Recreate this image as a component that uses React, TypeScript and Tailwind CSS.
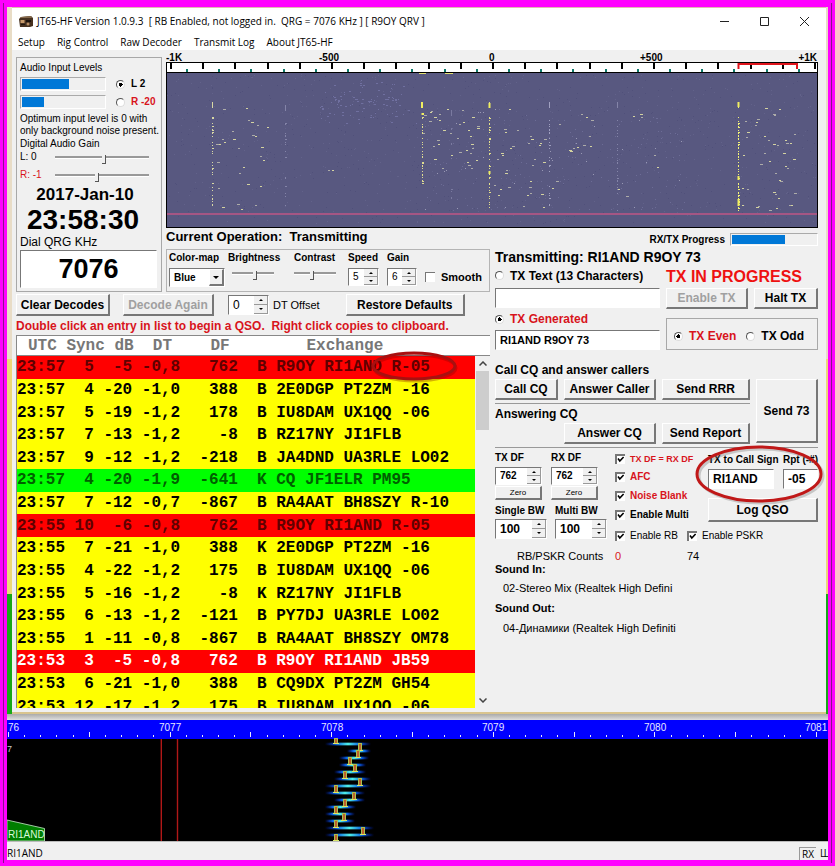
import { useState } from "react";
import type { ReactNode } from "react";
import clsx from "clsx";

type Decode = {
  utc: string;
  sync: number;
  db: number;
  dt: string;
  df: number;
  kind: string;
  text: string;
  tone?: "call" | "cq" | "selected";
};

const decodes: Decode[] = [
  { utc: "23:57", sync: 5, db: -5, dt: "-0,8", df: 762, kind: "B", text: "R9OY RI1AND R-05", tone: "call" },
  { utc: "23:57", sync: 4, db: -20, dt: "-1,0", df: 388, kind: "B", text: "2E0DGP PT2ZM -16" },
  { utc: "23:57", sync: 5, db: -19, dt: "-1,2", df: 178, kind: "B", text: "IU8DAM UX1QQ -06" },
  { utc: "23:57", sync: 7, db: -13, dt: "-1,2", df: -8, kind: "B", text: "RZ17NY JI1FLB" },
  { utc: "23:57", sync: 9, db: -12, dt: "-1,2", df: -218, kind: "B", text: "JA4DND UA3RLE LO02" },
  { utc: "23:57", sync: 4, db: -20, dt: "-1,9", df: -641, kind: "K", text: "CQ JF1ELR PM95", tone: "cq" },
  { utc: "23:57", sync: 7, db: -12, dt: "-0,7", df: -867, kind: "B", text: "RA4AAT BH8SZY R-10" },
  { utc: "23:55", sync: 10, db: -6, dt: "-0,8", df: 762, kind: "B", text: "R9OY RI1AND R-05", tone: "call" },
  { utc: "23:55", sync: 7, db: -21, dt: "-1,0", df: 388, kind: "K", text: "2E0DGP PT2ZM -16" },
  { utc: "23:55", sync: 4, db: -22, dt: "-1,2", df: 175, kind: "B", text: "IU8DAM UX1QQ -06" },
  { utc: "23:55", sync: 5, db: -16, dt: "-1,2", df: -8, kind: "K", text: "RZ17NY JI1FLB" },
  { utc: "23:55", sync: 6, db: -13, dt: "-1,2", df: -121, kind: "B", text: "PY7DJ UA3RLE LO02" },
  { utc: "23:55", sync: 1, db: -11, dt: "-0,8", df: -867, kind: "B", text: "RA4AAT BH8SZY OM78" },
  { utc: "23:53", sync: 3, db: -5, dt: "-0,8", df: 762, kind: "B", text: "R9OY RI1AND JB59", tone: "selected" },
  { utc: "23:53", sync: 6, db: -21, dt: "-1,0", df: 388, kind: "B", text: "CQ9DX PT2ZM GH54" },
  { utc: "23:53", sync: 12, db: -17, dt: "-1,2", df: 175, kind: "B", text: "IU8DAM UX1QQ -06" },
];

const sunken = "border-t border-l border-b border-r border-t-[#777] border-l-[#777] border-b-white border-r-white";
const raised =
  "border-t border-l border-b-2 border-r-2 border-t-white border-l-white border-b-[#777] border-r-[#777] bg-[#f0f0f0]";

function Button({ children, className, disabled }: { children: ReactNode; className?: string; disabled?: boolean }) {
  return (
    <button
      type="button"
      disabled={disabled}
      className={clsx(
        raised,
        "flex items-center justify-center font-bold whitespace-nowrap",
        disabled && "text-[#a0a0a0]",
        className
      )}
    >
      {children}
    </button>
  );
}

function Check({ label, className }: { label: string; className?: string }) {
  const [on, setOn] = useState(true);
  return (
    <label className={clsx("flex items-center gap-[5px] whitespace-nowrap", className)}>
      <span className="grid shrink-0">
        <input
          type="checkbox"
          checked={on}
          onChange={() => setOn(!on)}
          className="col-start-1 row-start-1 size-[10px] appearance-none border-t-2 border-l-2 border-[#777] bg-white"
        />
        {on && (
          <svg viewBox="0 0 10 10" className="pointer-events-none col-start-1 row-start-1 size-[10px]">
            <path d="M3 4.6 L4.8 7 L8.6 3" fill="none" stroke="#000" strokeWidth="1.6" />
          </svg>
        )}
      </span>
      {label}
    </label>
  );
}

function Radio({
  name,
  label,
  checked,
  className,
}: {
  name: string;
  label: string;
  checked?: boolean;
  className?: string;
}) {
  return (
    <label className={clsx("flex items-center gap-[6px] whitespace-nowrap", className)}>
      <input
        type="radio"
        name={name}
        defaultChecked={checked}
        className="size-[9px] shrink-0 appearance-none rounded-full border border-t-[#555] border-r-[#ddd] border-b-[#ddd] border-l-[#555] bg-white checked:bg-[radial-gradient(circle,#000_0_2px,#fff_2px)]"
      />
      {label}
    </label>
  );
}

function Spin({ label, value, className, textClass }: { label: string; value: string; className?: string; textClass?: string }) {
  return (
    <div className={clsx(sunken, "flex bg-white", className)}>
      <input aria-label={label} defaultValue={value} className={clsx("w-0 min-w-0 flex-1 pl-1 outline-none", textClass)} />
      <div className="flex w-[14px] flex-col bg-[#f0f0f0]">
        <button type="button" aria-label={`${label} up`} className="flex flex-1 items-center justify-center border-r border-b border-[#999]">
          <svg viewBox="0 0 4 2" className="w-1">
            <path d="M0 2 L2 0 L4 2z" />
          </svg>
        </button>
        <button type="button" aria-label={`${label} down`} className="flex flex-1 items-center justify-center border-r border-b border-[#999]">
          <svg viewBox="0 0 4 2" className="w-1">
            <path d="M0 0 L2 2 L4 0z" />
          </svg>
        </button>
      </div>
    </div>
  );
}

function Slider({ label, value, className }: { label: string; value: number; className?: string }) {
  return (
    <input
      type="range"
      aria-label={label}
      defaultValue={value}
      className={clsx(
        "h-[10px] min-w-0 appearance-none bg-transparent",
        "[&::-webkit-slider-runnable-track]:h-[3px] [&::-webkit-slider-runnable-track]:border-t-2 [&::-webkit-slider-runnable-track]:border-b [&::-webkit-slider-runnable-track]:border-t-[#999] [&::-webkit-slider-runnable-track]:border-b-white",
        "[&::-webkit-slider-thumb]:-mt-[3px] [&::-webkit-slider-thumb]:h-[9px] [&::-webkit-slider-thumb]:w-[4px] [&::-webkit-slider-thumb]:appearance-none [&::-webkit-slider-thumb]:border-r [&::-webkit-slider-thumb]:border-b [&::-webkit-slider-thumb]:border-[#555] [&::-webkit-slider-thumb]:bg-[#f0f0f0]",
        className
      )}
    />
  );
}

function Meter({ label, value, className }: { label: string; value: number; className?: string }) {
  return (
    <div
      role="progressbar"
      aria-label={label}
      aria-valuenow={value}
      className={clsx("border border-t-[#aaa] border-l-[#aaa] border-r-white border-b-white p-px", className)}
    >
      <div className="h-full bg-[#0078d7]" style={{ width: `${value}%` }} />
    </div>
  );
}

// Small repeatable generator so the noise stays the same on every render
function noise(seed: number) {
  let s = seed;
  return () => {
    s = (s * 16807) % 2147483647;
    return s / 2147483647;
  };
}

const signalDots: [number, number][] = [
  [223, 109], [246, 108], [248, 120], [251, 122], [257, 125], [267, 127], [252, 135], [255, 136],
  [232, 131], [233, 139], [222, 139], [219, 144], [216, 144], [224, 142], [238, 148], [261, 147],
  [260, 156], [263, 160], [217, 162], [243, 167], [239, 173], [247, 184], [218, 188], [260, 186],
  [237, 204], [241, 209], [255, 205], [222, 207], [328, 170], [332, 170],
  [424, 115], [430, 112], [431, 111], [434, 117], [439, 114], [439, 120], [429, 121], [447, 109], [462, 110],
  [472, 117], [459, 124], [463, 122], [477, 126], [468, 130], [450, 133], [443, 130], [457, 138], [470, 136],
  [437, 140], [438, 144], [433, 146], [471, 144], [472, 148], [466, 150], [459, 152], [451, 155], [470, 153],
  [434, 159], [442, 168], [467, 162], [468, 165], [476, 160], [471, 168], [477, 128], [423, 133],
  [509, 109], [504, 129], [505, 132], [517, 130], [501, 153], [497, 159], [510, 148], [512, 146], [502, 155],
  [506, 170], [505, 173], [494, 185], [500, 189], [508, 187], [498, 195], [530, 136], [531, 139], [528, 143],
  [540, 143], [544, 139], [539, 145], [534, 159], [543, 162], [532, 165], [530, 181], [529, 187], [527, 195],
  [530, 193], [541, 194], [523, 206], [543, 207], [556, 181], [552, 188], [559, 124],
  [569, 150], [573, 148], [577, 147], [583, 145], [590, 146], [589, 136], [570, 151], [581, 114], [586, 117],
  [591, 120], [633, 116], [641, 117], [640, 114], [654, 155], [657, 167], [626, 196], [618, 189],
  [745, 121], [747, 132], [746, 137], [743, 155], [757, 119], [756, 122], [755, 125], [765, 108], [774, 115],
  [779, 109], [773, 114], [764, 136], [768, 140], [773, 144], [777, 145], [785, 140], [786, 143], [790, 143],
  [794, 134], [783, 153], [764, 153], [769, 161], [760, 164], [785, 166], [787, 168], [793, 159], [775, 173],
  [779, 180], [780, 181], [742, 188], [747, 189], [773, 192], [775, 194], [778, 198], [794, 193], [776, 208],
  [758, 206], [756, 207], [789, 205], [791, 205], [769, 210], [742, 205],
];

function TopWaterfall() {
  const rnd = noise(77);
  const speckle = Array.from({ length: 1100 }, () => [167 + rnd() * 649, 74 + rnd() * 150, rnd()]);
  // sync tones, strong at the top of the period
  const tones = [
    { x: 212, from: 102, to: 211, color: "#d8d8a4", keep: 0.5 },
    { x: 422, from: 102, to: 184, color: "#dedb90", keep: 0.75 },
    { x: 489, from: 102, to: 211, color: "#e4e08a", keep: 0.65 },
    { x: 549, from: 102, to: 211, color: "#a0a0c0", keep: 0.35 },
    { x: 617, from: 102, to: 211, color: "#8484a8", keep: 0.3 },
    { x: 738, from: 102, to: 211, color: "#f4f478", keep: 0.75 },
    { x: 451, from: 110, to: 200, color: "#7a7aa0", keep: 0.15 },
    { x: 285, from: 105, to: 208, color: "#8484a8", keep: 0.3 },
  ];
  return (
    <svg viewBox="166 52 652 176" className="block w-full" role="img" aria-label="Audio waterfall">
      <g fontFamily="Liberation Sans, Arial, sans-serif" fontSize="10" fontWeight="bold">
        <text x="166" y="61">-1K</text>
        <text x="319" y="61">-500</text>
        <text x="489" y="61">0</text>
        <text x="640" y="61">+500</text>
        <text x="817" y="61" textAnchor="end">+1K</text>
      </g>
      <rect x="166" y="62" width="652" height="166" fill="#000" />
      <rect x="167" y="63" width="650" height="9" fill="#fff" />
      {Array.from({ length: 21 }, (_, i) => (
        <rect key={i} x={Math.round(170 + i * 32.2)} y="63" width="2" height="6" fill="#000" />
      ))}
      {Array.from({ length: 20 }, (_, i) => (
        <rect key={i} x={Math.round(186 + i * 32.2)} y="69" width="2" height="3" fill="#10796a" />
      ))}
      <path d="M738.5 69 V64 H797 V69" fill="none" stroke="#e0141c" strokeWidth="2" />
      <rect x="167" y="73" width="650" height="154" fill="#585880" />
      {speckle.map(([x, y, c], i) => (
        <rect key={i} x={Math.round(x)} y={Math.round(y)} width="1" height="1" fill={c > 0.5 ? "#62628a" : "#50507a"} />
      ))}
      {Array.from({ length: 100 }, (_, i) => (
        <rect
          key={i}
          x={Math.round(310 + (rnd() + rnd()) * 55)}
          y={Math.round(76 + (rnd() + rnd()) * 26)}
          width={1 + Math.round(rnd())}
          height="1"
          fill="#7070a0"
        />
      ))}
      {Array.from({ length: 170 }, (_, i) => (
        <rect
          key={i}
          x={Math.round(425 + rnd() * 260)}
          y={Math.round(105 + rnd() * 105)}
          width="1"
          height="1"
          fill={i % 5 ? "#6c6c96" : "#9898b4"}
        />
      ))}
      {tones.map((t) => (
        <g key={t.x} fill={t.color}>
          <rect x={t.x} y={t.from} width="1" height="6" />
          {Array.from({ length: t.to - t.from - 14 }, (_, i) =>
            rnd() < t.keep && i % 3 ? <rect key={i} x={t.x} y={t.from + 14 + i} width={rnd() > 0.8 ? 2 : 1} height="1" /> : null
          )}
        </g>
      ))}
      <path d="M422 102 V108 M421.5 114 H424 M489.5 103 V108 M489.5 171 V174 M738.5 102 V107 M738.5 176 V180 M738.5 199 V206" stroke="#f0ee60" strokeWidth="2" />
      <path d="M419 73.5 H426 M445 73.5 H453" stroke="#e3e072" />
      {signalDots.map(([x, y], i) => (
        <rect key={i} x={x} y={y} width={i % 3 ? 2 : 3} height="1" fill={i % 2 ? "#d4d3a0" : "#adaca8"} />
      ))}
      <path d="M167 214 H817" stroke="#a55684" strokeWidth="2" />
    </svg>
  );
}

// x position, top and bottom of each keyed tone on the panorama
const keyed: [number, number, number][] = [
  [336, 739, 744], [360, 744, 751], [358, 751, 758], [350, 758, 765], [355, 765, 772], [345, 772, 779],
  [360, 779, 786], [336, 786, 793], [354, 793, 800], [345, 800, 807], [336, 807, 814], [344, 814, 821],
  [336, 821, 828], [363, 828, 835], [336, 835, 841],
];

function Panorama() {
  return (
    <svg viewBox="7 720 821 121" className="block w-full" role="img" aria-label="Band panorama">
      <defs>
        <linearGradient id="glow">
          <stop offset="0" stopColor="#0016a0" stopOpacity="0" />
          <stop offset="0.25" stopColor="#0a62e0" />
          <stop offset="0.5" stopColor="#4ff0e8" />
          <stop offset="0.75" stopColor="#0a62e0" />
          <stop offset="1" stopColor="#0016a0" stopOpacity="0" />
        </linearGradient>
      </defs>
      <rect x="7" y="720" width="821" height="19" fill="#0000ff" />
      <rect x="7" y="739" width="821" height="102" fill="#000" />
      {Array.from({ length: 51 }, (_, i) => {
        const h = i % 5 === 0 ? 5 : 2;
        return <rect key={i} x={Math.round(8 + i * 16.16)} y={737 - h} width="1" height={h} fill="#e8e8ff" />;
      })}
      <g fontFamily="Liberation Sans, Arial, sans-serif" fontSize="10" fill="#e8e8ff">
        <text x="8" y="731">76</text>
        <text x="159" y="731">7077</text>
        <text x="321" y="731">7078</text>
        <text x="482" y="731">7079</text>
        <text x="644" y="731">7080</text>
        <text x="805" y="731">7081</text>
        <text x="7" y="752" fill="#c8c8c8" fontSize="9">7</text>
      </g>
      <rect x="160.6" y="739" width="1.4" height="102" fill="#b01818" />
      <rect x="176.8" y="739" width="1.4" height="102" fill="#b01818" />
      {keyed.slice(1).map(([x, top], i) => {
        const prev = keyed[i][0];
        const lo = Math.min(x, prev) - 11;
        const hi = Math.max(x, prev) + 11;
        return (
          <g key={top}>
            <rect x={lo} y={top - 2} width={hi - lo} height="4" fill="url(#glow)" opacity="0.35" />
            <rect x={lo} y={top - 1} width={hi - lo} height="2" fill="url(#glow)" />
          </g>
        );
      })}
      {keyed.map(([x, top, bottom]) => (
        <g key={top}>
          <rect x={x - 2} y={top - 1} width="4" height={bottom - top + 1} fill="#a8c050" />
          <rect x={x - 1} y={top} width="2" height={bottom - top} fill="#c0602c" />
          <rect x={x - 3} y={bottom - 1} width="6" height="1" fill="#d8e868" />
        </g>
      ))}
      <path d="M7 820 L44.5 828.5 V841 H7z" fill="#007d00" stroke="#c8e8c8" strokeWidth="0.8" />
      <text x="8" y="838" fontFamily="Liberation Sans, Arial, sans-serif" fontSize="10" fill="#d8f8d8">
        RI1AND
      </text>
    </svg>
  );
}

function TitleBar() {
  return (
    <>
      <header className="flex h-[26px] items-center bg-white pl-[7px] pr-[17px] font-['Open_Sans','Noto_Sans',sans-serif] text-[10px]">
        <svg viewBox="0 0 14 11" className="mr-1 w-[14px]" aria-hidden="true">
          <path d="M2 1 L12 0 L14 2 V10 L11 11 H1 L0 3z" fill="#46301f" />
          <path d="M2 1 L12 0 L13 2 H1z" fill="#86694b" />
          <rect x="1.5" y="4" width="4" height="3" fill="#c79a6a" />
          <rect x="7" y="4" width="5" height="2" fill="#1b120c" />
          <circle cx="9" cy="8" r="1.5" fill="#b98f66" />
          <rect x="2" y="8" width="4" height="1" fill="#20150d" />
        </svg>
        <h1 className="grow whitespace-pre">JT65-HF Version 1.0.9.3  [ RB Enabled, not logged in.  QRG = 7076 KHz ] [ R9OY QRV ]</h1>
        <div className="flex items-center gap-[31px]">
          <button type="button" aria-label="Minimize">
            <svg viewBox="0 0 9 9" className="size-[9px]"><path d="M0 4.5 H9" stroke="#222" /></svg>
          </button>
          <button type="button" aria-label="Maximize">
            <svg viewBox="0 0 9 9" className="size-[9px]"><path d="M0.5 0.5 H8.5 V8.5 H0.5z" fill="none" stroke="#222" /></svg>
          </button>
          <button type="button" aria-label="Close">
            <svg viewBox="0 0 9 9" className="size-[9px]"><path d="M0 0 L9 9 M9 0 L0 9" stroke="#222" /></svg>
          </button>
        </div>
      </header>
      <nav className="flex h-4 items-center gap-3 bg-white pl-[6px] font-['Open_Sans','Noto_Sans',sans-serif] text-[10px] whitespace-nowrap">
        {["Setup", "Rig Control", "Raw Decoder", "Transmit Log", "About JT65-HF"].map((m) => (
          <button key={m} type="button">{m}</button>
        ))}
      </nav>
    </>
  );
}

function AudioPanel() {
  return (
    <section className="row-span-2 mt-[7px] border border-[#a8a8a8] px-[3px] text-[10px] leading-3">
      <h2 className="mt-1">Audio Input Levels</h2>
      <div className="mt-[3px] flex h-[14px] items-center justify-between">
        <Meter label="Left level" value={57} className="h-[14px] w-[86px]" />
        <Radio name="ch" label="L 2" checked className="w-[42px] font-bold" />
      </div>
      <div className="mt-1 flex h-[14px] items-center justify-between">
        <Meter label="Right level" value={27} className="h-[14px] w-[86px]" />
        <Radio name="ch" label="R -20" className="w-[42px] font-bold text-[#d8141c]" />
      </div>
      <p className="mt-1 whitespace-nowrap">
        Optimum input level is 0 with
        <br />
        only background noise present.
      </p>
      <h2 className="mt-px">Digital Audio Gain</h2>
      <div className="mt-px flex h-3 items-center">
        <span className="w-[35px]">L: 0</span>
        <Slider label="Left gain" value={52} className="w-[94px]" />
      </div>
      <div className="mt-[6px] flex h-3 items-center">
        <span className="w-[35px] text-[#d8141c]">R: -1</span>
        <Slider label="Right gain" value={44} className="w-[94px]" />
      </div>
      <p className="mt-1 pr-2 text-center text-[17px] leading-5 font-bold">2017-Jan-10</p>
      <p className="pr-3 text-center text-[28px] leading-[29px] font-bold">23:58:30</p>
      <label htmlFor="dial" className="block text-[12px] leading-4">Dial QRG KHz</label>
      <input
        id="dial"
        defaultValue="7076"
        className={clsx(sunken, "h-[38px] w-[137px] bg-white text-center text-[27px] font-bold outline-none")}
      />
    </section>
  );
}

function DisplayPanel() {
  return (
    <section>
      <h2 className="h-[21px] text-[13px] leading-[17px] font-bold whitespace-pre">Current Operation:  Transmitting</h2>
      <div className="flex h-[43px] border border-[#b4b4b4] pl-[2px] text-[10px] leading-3 font-bold">
        <div className="w-[59px] pt-[2px] pr-[3px]">
          <label htmlFor="cmap">Color-map</label>
          <div className={clsx(sunken, "mt-1 grid h-[19px] bg-white")}>
            <select id="cmap" className="col-start-1 row-start-1 appearance-none pl-1 outline-none">
              <option>Blue</option>
            </select>
            <span className={clsx(raised, "pointer-events-none col-start-1 row-start-1 flex w-[15px] items-center justify-center justify-self-end")}>
              <svg viewBox="0 0 6 3" className="w-[6px]"><path d="M0 0 H6 L3 3z" /></svg>
            </span>
          </div>
        </div>
        <div className="w-[66px] pt-[2px]">
          <p>Brightness</p>
          <Slider label="Brightness" value={54} className="mt-1 ml-1 w-[42px]" />
        </div>
        <div className="w-[54px] pt-[2px]">
          <p>Contrast</p>
          <Slider label="Contrast" value={43} className="mt-1 w-[42px]" />
        </div>
        <div className="w-[39px] pt-[2px] pr-2">
          <p>Speed</p>
          <Spin label="Speed" value="5" className="mt-1 h-[18px]" textClass="font-normal" />
        </div>
        <div className="w-[38px] pt-[2px] pr-2">
          <p>Gain</p>
          <Spin label="Gain" value="6" className="mt-1 h-[18px]" textClass="font-normal" />
        </div>
        <label className="flex items-center gap-[6px] pt-3 text-[11px]">
          <input type="checkbox" className="size-[10px] appearance-none border-t border-l border-[#777] bg-white" />
          Smooth
        </label>
      </div>
    </section>
  );
}

function DecodeList() {
  return (
    <section className="col-span-2 text-[12px]">
      <div className="flex h-[26px] items-center text-[12px]">
        <Button className="h-[22px] w-[94px]">Clear Decodes</Button>
        <Button disabled className="ml-[13px] h-[22px] w-[91px]">Decode Again</Button>
        <Spin label="DT Offset" value="0" className="ml-[14px] h-5 w-[41px]" />
        <span className="ml-1 text-[11px]">DT Offset</span>
        <Button className="ml-[26px] h-[22px] w-[119px]">Restore Defaults</Button>
      </div>
      <p className="h-[17px] leading-[17px] font-bold whitespace-pre text-[#d8141c]">
        Double click an entry in list to begin a QSO.  Right click copies to clipboard.
      </p>
      <div className="border-t border-l border-[#888] font-['Liberation_Mono','Courier_New',monospace] text-[16px] font-bold">
        <div className="h-5 border-b border-[#888] bg-white pl-[11px] leading-5 whitespace-pre text-[#777]">
          UTC Sync dB  DT    DF        Exchange
        </div>
        <div className="relative flex h-[352px] overflow-hidden">
          <table className="h-[362px] grow border-collapse leading-5 whitespace-pre">
            <tbody>
              {decodes.map((d, i) => (
                <tr
                  key={i}
                  className={clsx(
                    !d.tone && "bg-[#ffff00] text-black",
                    d.tone === "call" && "bg-[#ff0000] text-[#600000]",
                    d.tone === "cq" && "bg-[#00ff00] text-[#006000]",
                    d.tone === "selected" && "bg-[#ff0000] text-white"
                  )}
                >
                  <td className="w-[5ch] p-0">{d.utc}</td>
                  <td className="w-[3ch] p-0 text-right">{d.sync}</td>
                  <td className="w-[4ch] p-0 text-right">{d.db}</td>
                  <td className="w-[5ch] p-0 text-right">{d.dt}</td>
                  <td className="w-[6ch] p-0 text-right">{d.df}</td>
                  <td className="w-[3ch] p-0 text-right">{d.kind}</td>
                  <td className="p-0 pl-[1ch]">{d.text}</td>
                </tr>
              ))}
            </tbody>
          </table>
          <div className="flex w-[15px] flex-col items-center bg-[#f0f0f0]">
            <svg viewBox="0 0 8 5" className="my-[5px] w-2"><path d="M0.5 4.5 L4 1 L7.5 4.5" fill="none" stroke="#444" strokeWidth="1.5" /></svg>
            <div className="h-[59px] w-[13px] bg-[#cdcdcd]" />
            <svg viewBox="0 0 8 5" className="mt-auto mb-[5px] w-2"><path d="M0.5 0.5 L4 4 L7.5 0.5" fill="none" stroke="#444" strokeWidth="1.5" /></svg>
          </div>
        </div>
      </div>
    </section>
  );
}

function TxPanel() {
  return (
    <section className="row-span-2 pl-px text-[12px] font-bold">
      <div className="flex h-5 items-center justify-end gap-[5px] pt-[3px] text-[10px]">
        RX/TX Progress
        <Meter label="RX/TX Progress" value={63} className="h-[13px] w-[88px]" />
      </div>
      <h2 className="h-[19px] text-[14px] leading-[19px]">Transmitting: RI1AND R9OY 73</h2>

      <div className="flex gap-[6px]">
        <div className="flex w-[165px] flex-col">
          <Radio name="tx" label="TX Text (13 Characters)" className="h-[21px] pb-1" />
          <input aria-label="TX text" maxLength={13} className={clsx(sunken, "h-5 bg-white px-1 outline-none")} />
          <Radio name="tx" label="TX Generated" checked className="h-[22px] text-[#d8141c]" />
          <input
            aria-label="Generated text"
            defaultValue="RI1AND R9OY 73"
            className={clsx(sunken, "h-5 bg-white pl-1 text-[11px] font-bold outline-none")}
          />
        </div>
        <div className="flex grow flex-col">
          <p className="h-[21px] text-[16px] leading-5 text-[#ee1111]">TX IN PROGRESS</p>
          <div className="flex gap-[6px]">
            <Button disabled className="h-[21px] w-[82px]">Enable TX</Button>
            <Button className="h-[21px] grow">Halt TX</Button>
          </div>
          <div className="mt-[9px] flex h-8 items-center gap-[10px] border border-[#a8a8a8] pt-1 pl-[7px]">
            <Radio name="slot" label="TX Even" checked className="text-[#d8141c]" />
            <Radio name="slot" label="TX Odd" />
          </div>
        </div>
      </div>

      <h3 className="mt-3 h-[17px] leading-4">Call CQ and answer callers</h3>
      <div className="flex gap-[6px]">
        <div className="w-[255px]">
          <div className="flex gap-[6px]">
            <Button className="h-[21px] w-[63px]">Call CQ</Button>
            <Button className="h-[21px] w-[92px]">Answer Caller</Button>
            <Button className="h-[21px] grow">Send RRR</Button>
          </div>
          <div className="mt-[3px] border-t border-[#999]" />
          <h3 className="h-[19px] leading-5">Answering CQ</h3>
          <div className="flex gap-[6px] pl-[69px]">
            <Button className="h-[21px] w-[92px]">Answer CQ</Button>
            <Button className="h-[21px] grow">Send Report</Button>
          </div>
        </div>
        <Button className="h-16 grow">Send 73</Button>
      </div>

      <div className="mt-[3px] flex border-t border-[#999] pt-[2px] text-[10px] leading-3">
        <div className="w-[120px] shrink-0 pt-[2px]">
          <div className="flex gap-[9px]">
            {["TX DF", "RX DF"].map((name) => (
              <div key={name} className="flex w-[47px] flex-col">
                <p>{name}</p>
                <Spin label={name} value="762" className="mt-[3px] h-[18px]" />
                <Button className="mt-px h-[14px] text-[8px] font-normal">Zero</Button>
              </div>
            ))}
          </div>
          <div className="mt-[5px] flex gap-2">
            {["Single BW", "Multi BW"].map((name) => (
              <div key={name} className="flex w-[52px] flex-col">
                <p className="whitespace-nowrap">{name}</p>
                <Spin label={name} value="100" className="mt-[2px] h-5" textClass="text-[12px]" />
              </div>
            ))}
          </div>
        </div>
        <div className="flex w-[93px] shrink-0 flex-col">
          <Check label="TX DF = RX DF" className="h-[18px] text-[9px] text-[#d8141c]" />
          <Check label="AFC" className="h-[18px] text-[#d8141c]" />
          <Check label="Noise Blank" className="h-[19px] text-[#d8141c]" />
          <Check label="Enable Multi" className="h-5" />
          <div className="flex h-[21px] items-center font-normal">
            <Check label="Enable RB" className="w-[72px] shrink-0" />
            <Check label="Enable PSKR" />
          </div>
        </div>
        <div className="relative flex min-w-0 grow flex-col gap-[9px] pt-1">
          <div className="flex gap-[6px]">
            <label className="flex w-[69px] flex-col gap-[3px] whitespace-nowrap">
              TX to Call Sign
              <input defaultValue="RI1AND" className={clsx(sunken, "h-5 w-[66px] bg-white pl-1 text-[12px] outline-none")} />
            </label>
            <label className="flex min-w-0 grow basis-0 flex-col gap-[3px] whitespace-nowrap">
              Rpt (-#)
              <input defaultValue="-05" className={clsx(sunken, "h-5 w-full bg-white pl-1 text-[12px] outline-none")} />
            </label>
          </div>
          <Button className="h-6 text-[12px]">Log QSO</Button>
          <svg viewBox="0 0 130 60" className="pointer-events-none absolute -top-2 -left-[13px] w-[130px] max-w-none overflow-visible">
            <ellipse cx="66" cy="34" rx="62" ry="27" fill="none" stroke="#777" strokeWidth="3" opacity="0.35" />
            <ellipse cx="64" cy="32" rx="62" ry="27" fill="none" stroke="#c01818" strokeWidth="3" />
          </svg>
        </div>
      </div>

      <p className="mt-[3px] flex h-[14px] text-[11px] leading-[14px] font-normal">
        <span className="w-[120px] pl-[22px] whitespace-nowrap">RB/PSKR Counts</span>
        <span className="w-[72px] text-[#d8141c]">0</span>
        <span>74</span>
      </p>
      <dl className="text-[11px] leading-[13px]">
        <dt>Sound In:</dt>
        <dd className="mt-[6px] pl-2 font-normal">02-Stereo Mix (Realtek High Defini</dd>
        <dt className="mt-[7px]">Sound Out:</dt>
        <dd className="mt-[7px] pl-2 font-normal">04-Динамики (Realtek High Definiti</dd>
      </dl>
    </section>
  );
}

export default function App() {
  return (
    <div className="min-h-screen bg-[#ff00ff] p-[3px] font-['Liberation_Sans',Arial,sans-serif] text-black">
      <div className="border-x border-[#8a108a] px-[3px] pt-1 pb-[3px]">
        {/* Desktop showing at the sides of the window */}
        <div className="bg-[linear-gradient(#e8dcc6_0_352px,#ecd879_352px_587px,#18a818_587px)] pr-[2px] pl-[5px]">
          <main className="border-t border-b-2 border-t-[#e0b8b0] border-b-[#d9c48e] bg-[#f0f0f0]">
            <TitleBar />
            <div className="relative grid grid-cols-[146px_minmax(0,1fr)_minmax(0,1fr)] gap-x-1 pr-2 pb-1 pl-1">
              <AudioPanel />
              <div className="col-span-2 pt-[2px]">
                <TopWaterfall />
              </div>
              <DisplayPanel />
              <TxPanel />
              <DecodeList />
              {/* Marker drawn round the received report */}
              <svg viewBox="0 0 88 34" className="pointer-events-none absolute top-[299px] left-[358px] w-[88px]">
                <ellipse cx="45" cy="19" rx="41" ry="13" fill="none" stroke="#700" strokeWidth="3" opacity="0.3" />
                <ellipse cx="44" cy="17" rx="41" ry="13" fill="none" stroke="#a81010" strokeWidth="3" />
              </svg>
            </div>
          </main>
        </div>
        <div className="h-[6px] bg-linear-to-b from-[#aaa] to-[#dedede]" />
        <Panorama />
        <footer className="flex h-[19px] items-center justify-between border-t border-[#bbb] bg-[#f0f0f0] pt-1 font-['Open_Sans','Noto_Sans',sans-serif] text-[10px] leading-3">
          <span>RI1AND</span>
          <span className="flex gap-1 whitespace-nowrap">
            <span className="border-t border-l border-[#999] px-[2px]">RX</span>
            <span className="w-2 overflow-hidden">Ш</span>
          </span>
        </footer>
      </div>
    </div>
  );
}
